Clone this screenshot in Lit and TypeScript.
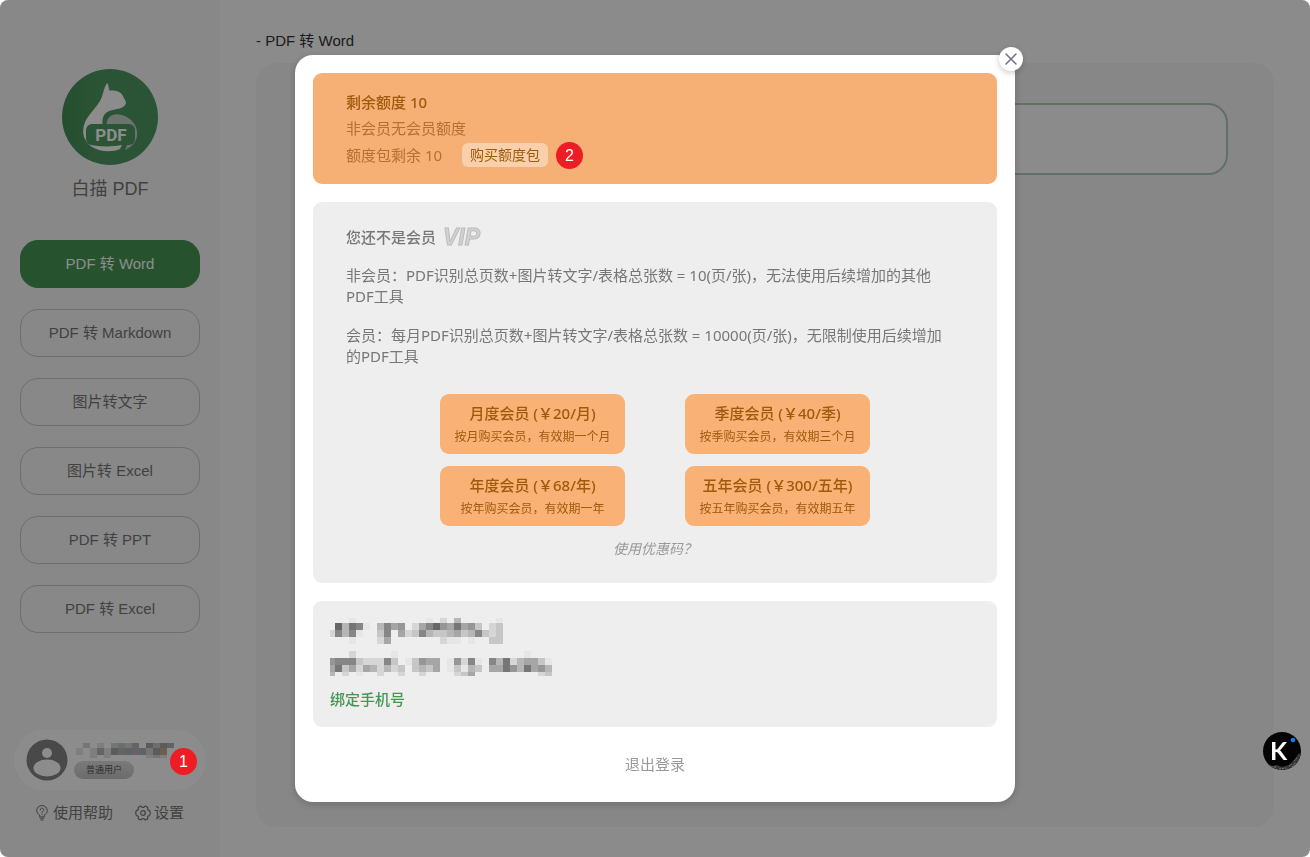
import { LitElement, html, css, svg } from "lit";
import { customElement, property, state } from "lit/decorators.js";

const tone = (c: string) => {
  if (c === "y") return "#c0b096";
  if (c === "u") return "#a6b6c0";
  const v = parseInt(c, 16) * 16 + 6;
  return `rgb(${v},${v},${v})`;
};

/** Blocky redaction strip: one string per row, one character per cell. */
@customElement("redacted-strip")
export class RedactedStrip extends LitElement {
  @property({ attribute: false }) rows: string[] = [];
  @property({ attribute: false }) heights: number[] = [];
  @property({ type: Number }) first = 7;

  static styles = css`
    :host { display: block; line-height: 0; }
    .strip { display: block; }
  `;

  render() {
    const cols = Math.max(0, ...this.rows.map((r) => r.length));
    const width = this.first + (cols - 1) * 7;
    const height = this.heights.reduce((a, b) => a + b, 0);
    let y = 0;
    const cells = this.rows.map((row, r) => {
      const top = y;
      y += this.heights[r];
      return [...row].map((c, i) =>
        c === "."
          ? null
          : svg`<rect x=${i ? this.first + (i - 1) * 7 : 0} y=${top} width=${i ? 7 : this.first} height=${this.heights[r]} fill=${tone(c)}></rect>`
      );
    });
    return html`<svg class="strip" width=${width} height=${height} shape-rendering="crispEdges" aria-hidden="true">${cells}</svg>`;
  }
}

const logo = html`<svg class="logo" viewBox="0 0 96 96" role="img" aria-label="白描 PDF">
  <defs>
    <linearGradient id="disc" x1="0" x2="1"><stop offset="0" stop-color="#458f57"></stop><stop offset="0.4" stop-color="#4e9a61"></stop><stop offset="1" stop-color="#4e9a61"></stop></linearGradient>
  </defs>
  <circle cx="48" cy="48" r="48" fill="url(#disc)"></circle>
  <path fill="#fff" d="M45.500 14 C46.500 16 46.500 19 47.500 21.500 C53 21 59 22 61 27 C62 30 64 31.500 64 34 C63 38.500 58 39.500 53 40.500 C44 42 40 46 40.500 54 L40 58 L26 60 L27 75 C32 78 52 78 60 76 L58 80 C50 83.500 38 83 30 78 C21 72 19 62 23.500 52 C27 45 34 39 38.500 31 C42 24 42 17 45.500 14Z"></path>
  <path fill="#c9d1cb" d="M45 58 C43 49 50 44.500 57 45.500 C67 47 74 54 75 62 C76 70 72 77 63 81 L65 76 C72 73 73 60 71 58Z"></path>
  <rect x="24" y="55" width="49" height="21" rx="6" fill="#4e9a61"></rect>
  <text x="49" y="72" text-anchor="middle" class="logo-text">PDF</text>
</svg>`;

const bulb = html`<svg width="12" height="16" viewBox="0 0 12 16" fill="none" stroke="#777" stroke-width="1" stroke-linecap="round" aria-hidden="true">
  <path d="M3.700 11.500 V10 C1.700 9 .7 7.500 .7 5.600 A5.300 5.100 0 0 1 11.300 5.600 C11.300 7.500 10.300 9 8.300 10 V11.500 Z M4 13.200 H8 M4.800 15 H7.200"></path>
  <path d="M4.300 5 A1.700 1.700 0 1 1 6.800 6.400 Q6 6.900 6 7.700 M6 9.200 V9.400"></path>
</svg>`;

const gear = html`<svg width="16" height="16" viewBox="0 0 16 16" fill="none" stroke="#777" stroke-width="1.200" stroke-linejoin="round" aria-hidden="true">
  <path d="M5 1.200 Q6 1 6.600 1.900 Q8 2.900 9.400 1.900 Q10 1 11 1.200 Q12.600 1.900 12.900 3 Q12 5 14.200 5.400 Q15.300 5.800 15.200 8 Q15.300 10.200 14.200 10.600 Q12 11 12.900 13 Q12.600 14.100 11 14.800 Q10 15 9.400 14.100 Q8 13.100 6.600 14.100 Q6 15 5 14.800 Q3.400 14.100 3.100 13 Q4 11 1.800 10.600 Q.7 10.200 .8 8 Q.7 5.800 1.800 5.400 Q4 5 3.100 3 Q3.400 1.900 5 1.200Z"></path>
  <circle cx="8" cy="8" r="2.300"></circle>
</svg>`;

@customElement("app-root")
export class AppRoot extends LitElement {
  @state() private active = 0;
  @state() private open = true;

  private tools = ["PDF 转 Word", "PDF 转 Markdown", "图片转文字", "图片转 Excel", "PDF 转 PPT", "PDF 转 Excel"];

  private plans = [
    { name: "月度会员 (￥20/月)", note: "按月购买会员，有效期一个月" },
    { name: "季度会员 (￥40/季)", note: "按季购买会员，有效期三个月" },
    { name: "年度会员 (￥68/年)", note: "按年购买会员，有效期一年" },
    { name: "五年会员 (￥300/五年)", note: "按五年购买会员，有效期五年" },
  ];

  static styles = css`
    :host {
      display: block;
      background: #fff;
      color: #777;
      font: 15px/22px "Liberation Sans", "Noto Sans CJK SC", sans-serif;
    }
    * { box-sizing: border-box; }
    button { font: inherit; color: inherit; border: 0; background: none; padding: 0; margin: 0; cursor: pointer; }
    p, h1, h2 { margin: 0; }
    a { color: inherit; text-decoration: none; }

    .app {
      display: grid;
      grid-template-columns: 220px 1fr;
      min-height: 100vh;
      border-radius: 8px;
      overflow: hidden;
      background: #fefefe;
    }

    .side { display: flex; flex-direction: column; background: #f7f7f7; padding: 69px 14px 33px; }
    .brand { display: flex; flex-direction: column; align-items: center; gap: 11px; }
    .logo { width: 96px; height: 96px; display: block; }
    .logo-text { font: bold 17px Roboto, sans-serif; fill: #fff; }
    .brand-name { font-size: 18px; line-height: 26px; font-weight: 400; }
    .tools { display: flex; flex-direction: column; gap: 21px; padding: 38px 6px 0; }
    .tool { height: 48px; border: 1px solid #c8c8c8; border-radius: 18px; text-align: center; }
    .tool.active { background: #459555; border-color: #459555; color: #fff; }
    .account { margin-top: auto; display: flex; align-items: center; gap: 8px; height: 60px; padding-left: 12px; border-radius: 30px; background: #fff; text-align: left; }
    .avatar { flex: none; display: block; }
    .who { display: flex; flex-direction: column; gap: 3px; align-items: flex-start; padding-top: 2px; }
    .level { width: 60px; height: 18px; margin-left: -2px; border-radius: 9px; background: linear-gradient(#dedede, #c4c4c4); font-size: 9px; line-height: 18px; text-align: center; color: #555; }
    .links { display: flex; gap: 22px; padding: 12px 0 0 22px; }
    .link { display: flex; align-items: center; gap: 5px; }
    .link + .link { gap: 3px; }

    .main { display: flex; flex-direction: column; padding: 30px 36px; }
    .crumb { font-size: 15px; line-height: 22px; font-weight: 400; color: #333; }
    .panel { flex: 1; margin-top: 11px; padding: 40px 46px; border-radius: 20px; background: #f6f6f6; }
    .drop { height: 72px; border: 2px solid #b0cdb9; border-radius: 20px; background: #fefefe; }

    .overlay { position: fixed; inset: 0; display: flex; align-items: center; justify-content: center; border-radius: 8px; background: rgba(0, 0, 0, 0.45); }
    .modal {
      position: relative;
      width: 720px;
      max-width: calc(100vw - 40px);
      padding: 18px;
      border-radius: 18px;
      background: #fff;
      box-shadow: 0 2px 8px rgba(0, 0, 0, 0.2);
      font-family: "Noto Sans", "Noto Sans CJK SC", sans-serif;
    }
    .close { position: absolute; top: -8px; right: -8px; width: 24px; height: 24px; display: grid; place-items: center; border-radius: 50%; background: #fff; box-shadow: 0 2px 6px rgba(0, 0, 0, 0.2); }
    .card { border-radius: 9px; background: #eee; }

    .quota { padding: 15px 33px; background: #f6af75; color: #b4712f; }
    .quota-title { font-size: 15px; line-height: 28px; font-weight: 500; color: #a05a0c; }
    .quota-line { line-height: 25px; }
    .pack { display: flex; align-items: center; height: 28px; }
    .buy { height: 24px; margin-left: 20px; padding: 0 8px; border-radius: 6px; background: #f9cfac; color: #a05a0c; font-size: 14px; line-height: 24px; }
    .badge { display: grid; place-items: center; flex: none; width: 27px; height: 27px; border-radius: 50%; background: #ee1c25; color: #fff; font: 16px/27px "Liberation Sans", sans-serif; }
    .pack .badge { margin-left: 8px; }

    .vip { margin-top: 18px; padding: 22px 33px 23px; }
    .vip-title { display: flex; align-items: center; gap: 6px; font-size: 15px; line-height: 26px; font-weight: 500; }
    .vip-mark { font: italic bold 23px "Liberation Sans", sans-serif; fill: #d2d2d2; stroke: #bcbcbc; stroke-width: 1; }
    .rule { margin-top: 18px; padding-right: 16px; line-height: 21px; color: #777; }
    .vip-title + .rule { margin-top: 15px; }
    .plans { display: grid; grid-template-columns: 185px 185px; justify-content: center; gap: 12px 60px; margin-top: 27px; }
    .plan { height: 60px; display: flex; flex-direction: column; align-items: center; justify-content: center; gap: 2px; border-radius: 9px; background: #f9b176; color: #a05a0c; }
    .plan-name { font-size: 15px; line-height: 24px; font-weight: 500; }
    .plan-note { font-size: 12px; line-height: 20px; }
    .coupon { display: block; margin: 12px auto 0; font-size: 14px; line-height: 22px; font-style: italic; color: #999; }

    .contact { display: flex; flex-direction: column; align-items: flex-start; margin-top: 18px; padding: 17px; }
    .contact redacted-strip + redacted-strip { margin-top: 7px; }
    .bind { margin-top: 12px; line-height: 22px; font-weight: 500; color: #459555; }
    .logout { display: block; margin: 26px auto 8px; line-height: 23px; color: #999; }

    .step-one { position: fixed; left: 170px; bottom: 82px; }
    .assistant { position: fixed; right: 8px; bottom: 86px; width: 40px; height: 40px; }
    .assistant svg { display: block; }
    .k { font: bold 25px Lato, sans-serif; fill: #fff; }
  `;

  render() {
    return html`
      <div class="app">
        <aside class="side">
          <div class="brand">
            ${logo}
            <h1 class="brand-name">白描 PDF</h1>
          </div>
          <nav class="tools">
            ${this.tools.map(
              (t, i) => html`<button class="tool ${i === this.active ? "active" : ""}" @click=${() => (this.active = i)}>${t}</button>`
            )}
          </nav>
          <button class="account" @click=${() => (this.open = true)}>
            <svg class="avatar" width="42" height="42" viewBox="0 0 42 42" aria-hidden="true">
              <circle cx="21" cy="21" r="20.500" fill="#858585"></circle>
              <circle cx="21" cy="14" r="5" fill="#fff"></circle>
              <ellipse cx="21" cy="29" rx="13.500" ry="8.500" fill="#fff"></ellipse>
            </svg>
            <span class="who">
              <redacted-strip .rows=${[".d.e.dcdb.acau", "e.ebeabubuday.", "..e.e.....ede."]} .heights=${[5, 7, 3]}></redacted-strip>
              <span class="level">普通用户</span>
            </span>
          </button>
          <div class="links">
            <a class="link" href="#help">${bulb}<span>使用帮助</span></a>
            <a class="link" href="#settings">${gear}<span>设置</span></a>
          </div>
        </aside>
        <main class="main">
          <h2 class="crumb">- PDF 转 Word</h2>
          <section class="panel"><div class="drop"></div></section>
        </main>
      </div>
      ${this.open ? this.renderModal() : null}
      <span class="badge step-one">1</span>
      <button class="assistant" aria-label="K">
        <svg width="40" height="40" viewBox="0 0 40 40">
          <defs><clipPath id="round"><circle cx="20" cy="20" r="19"></circle></clipPath></defs>
          <circle cx="20" cy="20" r="19" fill="#040404"></circle>
          <g clip-path="url(#round)">
            <path d="M6 33 L10 35 L15 34 L20 36 L27 34 L32 29 L37 22 L39 24 L34 37 L20 40 L8 38Z" fill="#383838"></path>
            <path d="M9 36 L14 36 M17 38 L24 37 M27 35 L30 33 M32 30 L35 27 M30 36 L34 31" stroke="#777" stroke-width="1" stroke-dasharray="2 1"></path>
          </g>
          <text class="k" x="8" y="29">K</text>
          <circle cx="31" cy="9" r="2.300" fill="#167df5"></circle>
        </svg>
      </button>
    `;
  }

  private renderModal() {
    return html`<div class="overlay">
      <div class="modal" role="dialog" aria-modal="true">
        <button class="close" aria-label="关闭" @click=${() => (this.open = false)}>
          <svg width="12" height="12" viewBox="0 0 12 12" stroke="#6b7280" stroke-width="1.500" stroke-linecap="round"><path d="M1 1 L11 11 M11 1 L1 11"></path></svg>
        </button>
        <section class="card quota">
          <h2 class="quota-title">剩余额度 10</h2>
          <p class="quota-line">非会员无会员额度</p>
          <div class="pack"><span>额度包剩余 10</span><button class="buy">购买额度包</button><span class="badge">2</span></div>
        </section>
        <section class="card vip">
          <h2 class="vip-title">
            <span>您还不是会员</span>
            <svg width="48" height="26" viewBox="0 0 48 26" role="img" aria-label="VIP"><text class="vip-mark" x="1" y="21">VIP</text></svg>
          </h2>
          <p class="rule">非会员：PDF识别总页数+图片转文字/表格总张数 = 10(页/张)，无法使用后续增加的其他PDF工具</p>
          <p class="rule">会员：每月PDF识别总页数+图片转文字/表格总张数 = 10000(页/张)，无限制使用后续增加的PDF工具</p>
          <div class="plans">
            ${this.plans.map(
              (p) => html`<button class="plan"><span class="plan-name">${p.name}</span><span class="plan-note">${p.note}</span></button>`
            )}
          </div>
          <button class="coupon">使用优惠码？</button>
        </section>
        <section class="card contact">
          <redacted-strip
            .first=${5}
            .heights=${[5, 7, 7, 7]}
            .rows=${["...e..........e.d.b.....e", ".6b78e.b8a9.da869a7a9c.dc", "d8b8e..c8.adc8bccbacb8cdc", "...e...da.......dee.e..cc"]}
          ></redacted-strip>
          <redacted-strip
            .first=${5}
            .heights=${[7, 7, 7, 4]}
            .rows=${["...d.....e..................e...", "9888cddd8c.ec9aa.e9d8e.8b7dbaace", "a7cadabdbdc.cbca.ecebc.aa79b7a9b", "b.d.e..d..d..d....dca.........dc"]}
          ></redacted-strip>
          <button class="bind">绑定手机号</button>
        </section>
        <button class="logout">退出登录</button>
      </div>
    </div>`;
  }
}
